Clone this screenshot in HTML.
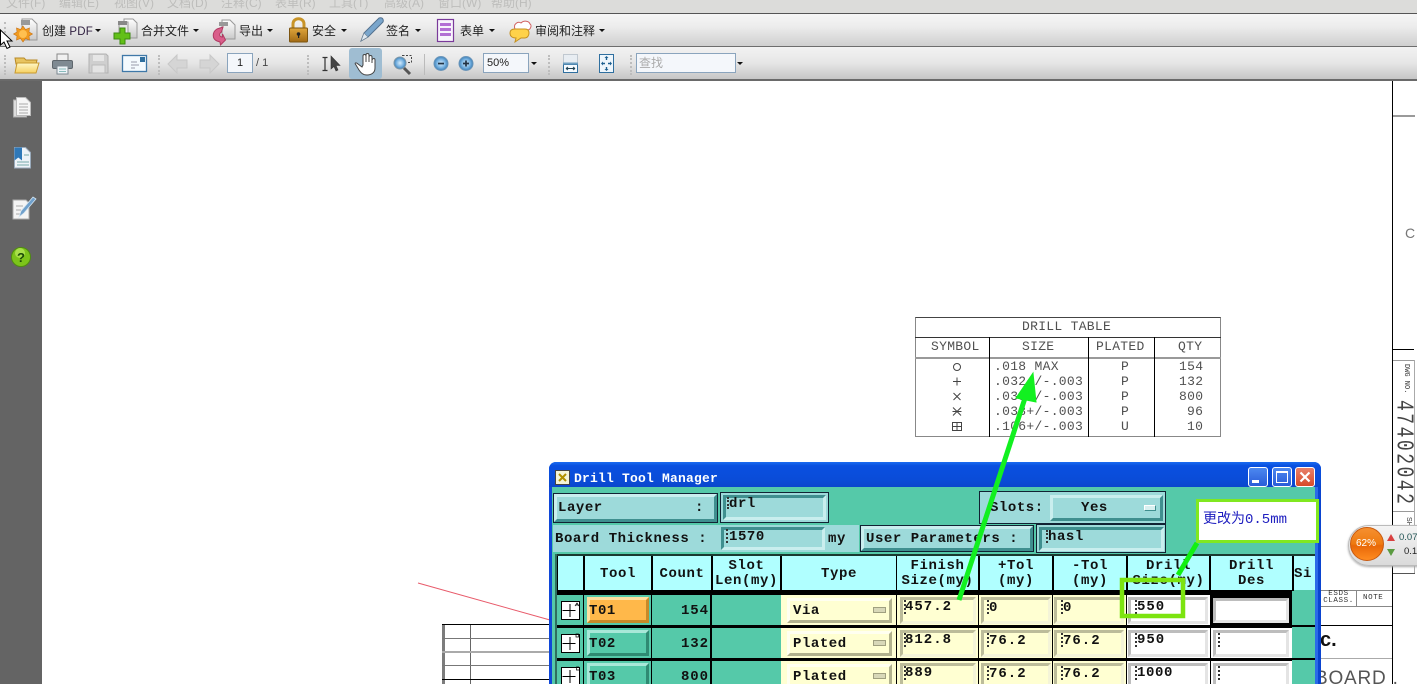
<!DOCTYPE html>
<html><head><meta charset="utf-8"><title>Drill Tool Manager</title>
<style>
html,body{margin:0;padding:0;width:1417px;height:684px;overflow:hidden;background:#fff}
#p{position:relative;width:1417px;height:684px;overflow:hidden;background:#fff;font-family:"Liberation Sans","Noto Sans CJK SC",sans-serif}
#p div{position:absolute;box-sizing:border-box}
.t{white-space:pre;line-height:1}
.m{font-size:12px;color:#bdbdbb;top:-3px}
.tb{font-size:12px;color:#222;top:25px}
.c{width:0;height:0;border-left:3px solid transparent;border-right:3px solid transparent;border-top:3px solid #111}
.in{background:#f4f7fb;border:1px solid #8aa4bd;height:20px;top:53px}
.grip{width:2px;border-left:2px dotted #bdbdbd}
.d{font-family:"Liberation Mono","DejaVu Sans Mono",monospace;font-weight:bold;font-size:14px;letter-spacing:.55px;color:#111;white-space:pre;line-height:1}
.b{background:#9ddada;border:3px solid;border-color:#c9eeee #3f8f8f #3f8f8f #c9eeee;outline:1px solid #123}
.f{background:#9ddada;border:3px solid;border-color:#3f8f8f #c9eeee #c9eeee #3f8f8f}
.h{background:#b0ffff;top:556px;height:34px;text-align:center;font-family:"Liberation Mono",monospace;font-weight:bold;font-size:14px;line-height:15px;letter-spacing:.6px;color:#111;white-space:pre;padding-top:3px}
.tc{background:#55c9a9}
.y{background:#ffffd2}
.w{background:#fff}
.ty{background:#ffffd2;border:3px solid;border-color:#fffff0 #b2b28e #b2b28e #fffff0}
.fy{background:#ffffd2;border:3px solid;border-color:#bcbc9a #f4f4d8 #f4f4d8 #bcbc9a}
.fw{background:#fff;border:3px solid;border-color:#bdbdbd #e4e4e4 #e4e4e4 #bdbdbd}
.bt{background:#55c9a9;border:3px solid;border-color:#a8e8d8 #2f8a72 #2f8a72 #a8e8d8}
.cur{width:1px;border-left:2px dotted #333}
.g{font-family:"Liberation Mono",monospace;font-size:13px;letter-spacing:.3px;color:#505050;white-space:pre;line-height:1}
.ln{background:#000}
.gr{background:#9a9a9a}
</style></head><body><div id="p">

<!-- menu bar -->
<div style="left:0;top:0;width:1417px;height:13px;background:#dcdcda"></div>
<div class="t m" style="left:6px">文件(F)</div><div class="t m" style="left:59px">编辑(E)</div><div class="t m" style="left:114px">视图(V)</div><div class="t m" style="left:167px">文档(D)</div><div class="t m" style="left:221px">注释(C)</div><div class="t m" style="left:275px">表单(R)</div><div class="t m" style="left:329px">工具(T)</div><div class="t m" style="left:384px">高级(A)</div><div class="t m" style="left:438px">窗口(W)</div><div class="t m" style="left:491px">帮助(H)</div>

<!-- toolbars -->
<div style="left:0;top:13px;width:1417px;height:34px;background:linear-gradient(#f6f6f6,#ececec 40%,#cfcfcf);border-top:1px solid #555;border-bottom:1px solid #6d6d6d"></div>
<div style="left:0;top:47px;width:1417px;height:34px;background:linear-gradient(#f2f2f2,#e6e6e6 50%,#c6c6c6);border-bottom:2px solid #6a6a6a"></div>

<div class="grip" style="left:4px;top:22px;height:19px"></div>
<div class="grip" style="left:4px;top:55px;height:20px"></div>
<div class="grip" style="left:158px;top:55px;height:20px"></div>
<div class="grip" style="left:307px;top:55px;height:20px"></div>
<div class="grip" style="left:548px;top:55px;height:20px"></div>
<div class="grip" style="left:630px;top:55px;height:20px"></div>
<div style="left:424px;top:54px;width:1px;height:21px;background:#bbb"></div>

<div class="t tb" style="left:42px">创建 <span style="color:#302040;font-size:11.500px;letter-spacing:.2px">PDF</span></div><div class="c" style="left:95px;top:29px"></div>
<div class="t tb" style="left:141px">合并文件</div><div class="c" style="left:193px;top:29px"></div>
<div class="t tb" style="left:239px">导出</div><div class="c" style="left:267px;top:29px"></div>
<div class="t tb" style="left:312px">安全</div><div class="c" style="left:341px;top:29px"></div>
<div class="t tb" style="left:386px">签名</div><div class="c" style="left:415px;top:29px"></div>
<div class="t tb" style="left:460px">表单</div><div class="c" style="left:489px;top:29px"></div>
<div class="t tb" style="left:535px">审阅和注释</div><div class="c" style="left:599px;top:29px"></div>

<div class="in" style="left:227px;width:26px"></div>
<div class="t" style="left:237px;top:58px;font-size:11px;color:#222">1</div>
<div class="t" style="left:256px;top:58px;font-size:11px;color:#444">/ 1</div>
<div class="in" style="left:483px;width:46px"></div>
<div class="t" style="left:487px;top:58px;font-size:11px;color:#222">50%</div><div class="c" style="left:531px;top:62px"></div>
<div class="in" style="left:636px;width:100px"></div>
<div class="t" style="left:639px;top:57px;font-size:12px;color:#aaa">查找</div><div class="c" style="left:737px;top:62px"></div>
<div style="left:349px;top:48px;width:33px;height:31px;background:#9fbdd2;border-radius:3px"></div>

<svg style="position:absolute;left:0;top:0" width="760" height="82" viewBox="0 0 760 82">
<defs>
<linearGradient id="doc" x1="0" y1="0" x2="0" y2="1"><stop offset="0" stop-color="#fff"/><stop offset="1" stop-color="#c9c9c9"/></linearGradient>
<linearGradient id="fold" x1="0" y1="0" x2="0" y2="1"><stop offset="0" stop-color="#fff8c8"/><stop offset="1" stop-color="#f6d060"/></linearGradient>
<linearGradient id="lock" x1="0" y1="0" x2="0" y2="1"><stop offset="0" stop-color="#e0a63c"/><stop offset="1" stop-color="#a26a14"/></linearGradient>
<radialGradient id="blu"><stop offset="0" stop-color="#d6ecfb"/><stop offset=".6" stop-color="#7ab4e2"/><stop offset="1" stop-color="#3c80b8"/></radialGradient>
</defs>
<!-- create pdf -->
<path d="M22 19h10l5 5v16H22z" fill="url(#doc)" stroke="#999"/><rect x="21" y="20" width="9" height="5" fill="#999"/>
<path d="M23 26l2.500 3.500 4-1.500-.5 4 3.500 2-3.500 2 .5 4-4-1.500L23 42l-2.500-3.500-4 1.500.5-4-3.500-2 3.500-2-.5-4 4 1.500z" fill="#f09a20" stroke="#c87010" stroke-width=".6"/><circle cx="23" cy="34" r="4" fill="#ffc050"/>
<!-- merge -->
<path d="M124 19h9l4 4v15h-13z" fill="url(#doc)" stroke="#999"/><path d="M119 22h9v16h-9z" fill="#e8e8e8" stroke="#999"/><rect x="118" y="21" width="9" height="4" fill="#888"/>
<path d="M120 28h5v5h5v6h-5v5h-5v-5h-6v-6h6z" fill="#62c018" stroke="#3c8a10"/>
<!-- export -->
<path d="M222 20h8l5 5v14h-13z" fill="url(#doc)" stroke="#999"/><rect x="219" y="22" width="9" height="4" fill="#999"/>
<path d="M223 27l-6 2c-5 3-5 10 0 12l3 1 .5 3 5-5-3-6v3c-3 0-4-3-1-5z" fill="#d95e8a" stroke="#b03a62"/>
<!-- lock -->
<path d="M293 29v-5c0-7 11-7 11 0v5" fill="none" stroke="#c89428" stroke-width="3"/><rect x="289.500" y="28" width="18" height="14" rx="1" fill="url(#lock)" stroke="#7c5410"/><circle cx="298.500" cy="34" r="1.800" fill="#222"/><rect x="298" y="34" width="1.200" height="4" fill="#222"/>
<!-- pen -->
<path d="M361 41l3-8 15-15c3-1 5 1 4 4l-15 15z" fill="#7aa6cc" stroke="#53718f"/><path d="M361 41l3-8 4 4z" fill="#dfe8f0" stroke="#6a7f90" stroke-width=".6"/>
<!-- form -->
<rect x="437.500" y="19.500" width="16" height="22" fill="#f8f4fc" stroke="#7a3a9a" stroke-width="1.200"/><rect x="440" y="23" width="11" height="3" fill="#b36fd4"/><rect x="440" y="28" width="11" height="3" fill="#b36fd4"/><rect x="440" y="33" width="11" height="3" fill="#b36fd4"/>
<!-- comment -->
<path d="M515 29c-2-5 3-8 6-6 3-3 8-2 9 1 2 1 1 6-3 6h-8z" fill="#fff" stroke="#d06060"/>
<path d="M510 33c0-3 2-4 5-4h10c3 0 4 2 4 4 0 3-2 5-4 5h-4l-6 4 1-4c-4 0-6-2-6-5z" fill="#ffd24a" stroke="#c59020"/>
<!-- folder -->
<path d="M15 58h9l2 2h11l-1 4H16z" fill="#e8c460" stroke="#b88a28"/><path d="M15 73l2-10h22l-3 10z" fill="url(#fold)" stroke="#c89a30"/>
<!-- printer -->
<rect x="57" y="54" width="11" height="7" fill="#f0f0f0" stroke="#888"/><rect x="52.500" y="60.500" width="20" height="8" rx="1.500" fill="#7f8a92" stroke="#5e666c"/><rect x="57" y="66" width="11" height="8" fill="#eef3f7" stroke="#7c8890"/><line x1="59" y1="69" x2="66" y2="69" stroke="#8bb"/><line x1="59" y1="71.500" x2="66" y2="71.500" stroke="#8bb"/>
<!-- save -->
<path d="M89 54h17l2 2v17H89z" fill="#cfcfcf" stroke="#b2b2b2"/><rect x="93" y="55" width="11" height="6" fill="#e6e6e6"/><rect x="92" y="65" width="13" height="8" fill="#e4e4e4" stroke="#bbb"/>
<!-- email -->
<rect x="122.500" y="55.500" width="24" height="16" fill="#f4fafe" stroke="#3f78a8" stroke-width="1.300"/><rect x="140" y="57" width="5" height="5" fill="#2f6f9f"/><line x1="131" y1="62" x2="137" y2="62" stroke="#99a"/><line x1="131" y1="65" x2="139" y2="65" stroke="#99a"/><line x1="131" y1="68" x2="135" y2="68" stroke="#99a"/>
<!-- back fwd -->
<path d="M168 64l9-9v5h10v8h-10v5z" fill="#d5d5d5" stroke="#c8c8c8"/>
<path d="M219 64l-9-9v5h-10v8h10v5z" fill="#d5d5d5" stroke="#c8c8c8"/>
<!-- select -->
<path d="M322.500 57.500h5M325 57.500v13M322.500 70.500h5" fill="none" stroke="#333" stroke-width="1.200"/><path d="M331 56v13l3-2.500 2 4.500 2-1-2-4.500h4z" fill="#444" stroke="#333" stroke-width=".6"/>
<!-- hand -->
<path d="M358 64c-2-2-4-1-2 1l3 5c2 3 4 5 8 5s8-2 8-7v-8c0-2-2-2-3 0v3-6c0-2-3-2-3 0v5-7c0-2-3-2-3 0v7-6c0-2-3-2-3 0v9l-1 2z" fill="#fff" stroke="#444" stroke-width="1"/>
<!-- marquee zoom -->
<rect x="402.500" y="55.500" width="9" height="7" fill="none" stroke="#444" stroke-dasharray="2 1.500"/>
<circle cx="400" cy="63" r="6" fill="url(#blu)" stroke="#7f98a8"/><path d="M404 68l6 6" stroke="#555" stroke-width="3"/>
<!-- zoom -/+ -->
<circle cx="441" cy="63.500" r="7" fill="url(#blu)" stroke="#6a94b8"/><rect x="438" y="62.700" width="6" height="1.700" fill="#234"/>
<circle cx="466" cy="63.500" r="7" fill="url(#blu)" stroke="#6a94b8"/><path d="M463 63.500h6M466 60.500v6" stroke="#234" stroke-width="1.700"/>
<!-- fit width / page -->
<rect x="563.500" y="54.500" width="14" height="9" fill="#e8edf2" stroke="#c0c8d0"/><rect x="563.500" y="64.500" width="14" height="8" fill="#f6fbff" stroke="#2f6f9f"/><rect x="563" y="62.500" width="15" height="2" fill="#6f9fc0"/><path d="M566 68.500h9M566 68.500l2-1.500M566 68.500l2 1.500M575 68.500l-2-1.500M575 68.500l-2 1.500" stroke="#245" fill="none"/>
<rect x="599.500" y="54.500" width="14" height="18" fill="#eef6fc" stroke="#2f6f9f"/><path d="M606.500 57v3M606.500 67v3M602 63.500h3M608 63.500h3" stroke="#1d5f8f" stroke-width="1.400"/><path d="M606.500 56l-2 2h4zM606.500 71l-2-2h4zM601 63.500l2-2v4zM612 63.500l-2-2v4z" fill="#1d5f8f"/>
<!-- cursor -->
<path d="M.5 30v15l3.500-3 3 6.500 3-1.500-3-6h5z" fill="#fff" stroke="#000"/>
</svg>

<!-- sidebar -->
<div style="left:0;top:81px;width:42px;height:603px;background:#646464"></div>
<svg style="position:absolute;left:0;top:81px" width="42" height="190" viewBox="0 0 42 190">
<path d="M13.500 19h8v17h13V36H13.500z" fill="#ccc"/><path d="M13.500 19h13v17h-13z" fill="#dcdcdc" stroke="#aaa"/><path d="M16.500 16.500h9l5 5v13h-14z" fill="#f6f6f6" stroke="#bbb"/><path d="M19 23h9M19 26h9M19 29h9M19 32h9" stroke="#aaa"/>
<path d="M14.500 66.500h11l5 5v15.500h-16z" fill="#eef3f8" stroke="#9ab"/><path d="M14.500 66.500h7.500v13l-3.700-3-3.800 3z" fill="#2f78b8"/><path d="M24 74h5M17 81h12M17 84h12" stroke="#7aa"/>
<path d="M13 119h13l3 3v16H13z" fill="#f4f4f4" stroke="#aaa"/><path d="M16 125h7M16 129h5M16 133h4" stroke="#aaa"/>
<path d="M19 136l2-6 12-14 3 2-12 14z" fill="#6fa0cc" stroke="#d8e6f0" stroke-width=".8"/>
<circle cx="21" cy="176" r="9.500" fill="#7cc41a" stroke="#4f8c10"/><circle cx="20" cy="172" r="5" fill="#a8e04a"/>
<text x="21" y="181" font-family="Liberation Sans" font-weight="bold" font-size="13" text-anchor="middle" fill="#1c4a08">?</text>
</svg>

<!-- right side drawing -->
<div class="ln" style="left:1392px;top:81px;width:1px;height:603px"></div>
<div class="gr" style="left:1393px;top:115px;width:22px;height:2px"></div>
<div class="t" style="left:1405px;top:226px;font-size:14px;color:#777">C</div>
<div class="ln" style="left:1393px;top:349px;width:21px;height:1px"></div>
<div class="gr" style="left:1393px;top:360px;width:21px;height:1px"></div>
<div style="left:1414px;top:360px;width:1px;height:213px;background:#aaa"></div>
<div class="t" style="left:1396px;top:378px;transform-origin:0 0;transform:rotate(90deg) translate(-14px,-13px);font-size:7px;color:#333;font-family:'Liberation Mono',monospace">DWG NO.</div>
<div class="t" style="left:1415px;top:400px;transform-origin:0 0;transform:rotate(90deg) scaleY(1.350);font-size:18px;letter-spacing:2.500px;color:#444;font-family:'Liberation Mono',monospace;font-weight:normal">47402042</div>
<div class="gr" style="left:1393px;top:511px;width:21px;height:1px"></div>
<div class="t" style="left:1412px;top:517px;transform-origin:0 0;transform:rotate(90deg);font-size:7px;color:#333">SH</div>
<div style="left:1393px;top:573px;width:22px;height:1px;background:#555"></div>

<div style="left:1321px;top:590px;width:71px;height:1px;background:#888"></div>
<div style="left:1321px;top:606px;width:71px;height:1px;background:#888"></div>
<div style="left:1356px;top:590px;width:1px;height:17px;background:#888"></div>
<div class="t" style="left:1321px;top:591px;width:35px;text-align:center;font:7.500px/7px 'Liberation Mono',monospace;letter-spacing:.6px;color:#333">ESDS<br>CLASS.</div>
<div class="t" style="left:1363px;top:594px;font:7.500px 'Liberation Mono',monospace;letter-spacing:.6px;color:#333">NOTE</div>
<div class="ln" style="left:1321px;top:625px;width:71px;height:1px"></div>
<div style="left:1321px;top:658px;width:71px;height:1px;background:#aaa"></div>
<div class="t" style="left:1320px;top:630px;font-size:20px;font-weight:bold;color:#111">c.</div>
<div class="t" style="left:1315px;top:668px;font:19px 'Liberation Sans',sans-serif;letter-spacing:.8px;color:#555">BOARD .</div>

<!-- widget -->
<div style="left:1348px;top:525px;width:90px;height:41px;border-radius:21px;background:linear-gradient(#f4f4f4,#dadada);border:1px solid #bbb;box-shadow:0 1px 2px #aaa"></div>
<div style="left:1350px;top:527px;width:34px;height:34px;border-radius:50%;background:linear-gradient(#f59030,#ee7a10 50%,#e86808 55%,#ff8c20);border:1px solid #c85a10"></div>
<div class="t" style="left:1356px;top:539px;font-size:10px;color:#fff">62%</div>
<div style="left:1387px;top:534px;width:0;height:0;border-left:4px solid transparent;border-right:4px solid transparent;border-bottom:7px solid #d84040"></div>
<div style="left:1387px;top:549px;width:0;height:0;border-left:4px solid transparent;border-right:4px solid transparent;border-top:7px solid #5a9a40"></div>
<div class="t" style="left:1399px;top:533px;font-size:9.500px;color:#255">0.07</div>
<div class="t" style="left:1404px;top:547px;font-size:9.500px;color:#222">0.1</div>

<!-- lower left table -->
<div style="left:442px;top:624px;width:3px;height:60px;background:#7c7c7c"></div>
<div style="left:470px;top:624px;width:1px;height:60px;background:#666"></div>
<div class="ln" style="left:442px;top:624px;width:108px;height:1px"></div>
<div style="left:442px;top:638px;width:108px;height:1px;background:#777"></div>
<div style="left:442px;top:651px;width:108px;height:2px;background:#aaa"></div>
<div style="left:442px;top:665px;width:108px;height:1px;background:#777"></div>
<div class="ln" style="left:442px;top:679px;width:108px;height:1px"></div>

<!-- drill table -->
<div style="left:915px;top:317px;width:306px;height:120px;border:1px solid #444;border-bottom-color:#888;border-left-color:#888;border-right-color:#888"></div>
<div style="left:915px;top:337px;width:306px;height:1px;background:#333"></div>
<div style="left:915px;top:357px;width:306px;height:2px;background:#999"></div>
<div class="ln" style="left:989px;top:337px;width:1px;height:100px"></div>
<div class="ln" style="left:1088px;top:337px;width:1px;height:100px"></div>
<div class="ln" style="left:1154px;top:337px;width:1px;height:100px"></div>
<div class="g" style="left:1022px;top:320px">DRILL TABLE</div>
<div class="g" style="left:931px;top:340px">SYMBOL</div><div class="g" style="left:1022px;top:340px">SIZE</div><div class="g" style="left:1096px;top:340px">PLATED</div><div class="g" style="left:1178px;top:340px">QTY</div>
<div class="g" style="left:994px;top:360px">.018 MAX</div><div class="g" style="left:994px;top:375px">.032+/-.003</div><div class="g" style="left:994px;top:390px">.038+/-.003</div><div class="g" style="left:994px;top:405px">.038+/-.003</div><div class="g" style="left:994px;top:420px">.106+/-.003</div>
<div class="g" style="left:1121px;top:360px">P</div><div class="g" style="left:1121px;top:375px">P</div><div class="g" style="left:1121px;top:390px">P</div><div class="g" style="left:1121px;top:405px">P</div><div class="g" style="left:1121px;top:420px">U</div>
<div class="g" style="left:1179px;top:360px">154</div><div class="g" style="left:1179px;top:375px">132</div><div class="g" style="left:1179px;top:390px">800</div><div class="g" style="left:1187px;top:405px">96</div><div class="g" style="left:1187px;top:420px">10</div>
<svg style="position:absolute;left:945px;top:360px" width="24" height="72" viewBox="0 0 24 72" fill="none" stroke="#444">
<circle cx="12" cy="7" r="3.500"/><path d="M8 21.500h8M12 17.500v8"/><path d="M8.500 33l7 7M15.500 33l-7 7"/><path d="M8 47.500l8 8M16 47.500l-8 8M7.500 51.500h9"/><rect x="7.500" y="62.500" width="9" height="8"/><path d="M12 62.500v8M7.500 66.500h9"/>
</svg>

<!-- red line -->
<svg style="position:absolute;left:410px;top:575px" width="145" height="50"><line x1="8" y1="8" x2="140" y2="45" stroke="#e85a6a" stroke-width="1"/></svg>

<!-- dialog -->
<div style="left:549px;top:462px;width:772px;height:222px;background:#0a44d0;border-radius:7px 7px 0 0"></div>
<div style="left:549px;top:462px;width:772px;height:25px;border-radius:7px 7px 0 0;background:linear-gradient(#1a6cf0,#0a50e0 15%,#0a4cd8 70%,#0a46cc)"></div>
<div style="left:552px;top:487px;width:763px;height:197px;background:#55c9a9"></div>
<div style="left:1315px;top:487px;width:3px;height:197px;background:#2a6ae8"></div>
<div style="left:549px;top:487px;width:3px;height:197px;background:#1048d8"></div>
<div style="left:555px;top:470px;width:15px;height:15px;background:#f4f4d8;border:1px solid #444"></div>
<svg style="position:absolute;left:555px;top:470px" width="15" height="15"><path d="M4 4l7 7M11 4l-7 7" stroke="#b09000" stroke-width="2"/></svg>
<div class="t" style="left:574px;top:471px;font:bold 13px 'Liberation Mono',monospace;color:#fff;letter-spacing:.2px">Drill Tool Manager</div>
<div style="left:1248px;top:467px;width:20px;height:20px;border:1px solid #fff;border-radius:3px;background:linear-gradient(#4c88f0,#2a5cd8)"></div><div style="left:1252px;top:480px;width:7px;height:3px;background:#fff"></div>
<div style="left:1272px;top:467px;width:20px;height:20px;border:1px solid #fff;border-radius:3px;background:linear-gradient(#4c88f0,#2a5cd8)"></div><div style="left:1276px;top:471px;width:12px;height:12px;border:1px solid #fff;border-top-width:2px"></div>
<div style="left:1295px;top:467px;width:20px;height:20px;border:1px solid #fff;border-radius:3px;background:linear-gradient(#e8806a,#d84a28)"></div>
<svg style="position:absolute;left:1295px;top:467px" width="20" height="20"><path d="M5.500 5.500l9 9M14.500 5.500l-9 9" stroke="#fff" stroke-width="2.200"/></svg>

<!-- top controls -->
<div class="b" style="left:554px;top:494px;width:163px;height:28px"></div>
<div class="d" style="left:558px;top:501px">Layer</div><div class="d" style="left:695px;top:501px">:</div>
<div style="left:720px;top:492px;width:109px;height:31px;background:#9ddada;border:1px solid #123"></div>
<div class="f" style="left:723px;top:495px;width:103px;height:25px"></div>
<div class="cur" style="left:727px;top:497px;height:12px"></div><div class="d" style="left:729px;top:497px">drl</div>
<div style="left:979px;top:491px;width:187px;height:33px;background:#9ddada;border:1px solid #123"></div>
<div class="b" style="left:1050px;top:495px;width:113px;height:26px;outline:none"></div>
<div class="d" style="left:990px;top:501px">Slots:</div><div class="d" style="left:1081px;top:501px">Yes</div>
<div style="left:1144px;top:505px;width:12px;height:6px;background:#d8f0f0;border:1px solid #3f8f8f;border-top-color:#fff;border-left-color:#fff"></div>

<div style="left:553px;top:525px;width:306px;height:27px;background:#9ddada"></div>
<div class="d" style="left:555px;top:532px">Board Thickness :</div>
<div class="f" style="left:721px;top:527px;width:104px;height:23px"></div>
<div class="cur" style="left:726px;top:529px;height:14px"></div><div class="d" style="left:729px;top:530px">1570</div>
<div class="d" style="left:828px;top:532px">my</div>
<div style="left:859px;top:524px;width:306px;height:28px;background:#55c9a9"></div>
<div class="b" style="left:861px;top:526px;width:172px;height:25px"></div>
<div class="d" style="left:866px;top:532px">User Parameters :</div>
<div style="left:1036px;top:524px;width:130px;height:29px;background:#9ddada;border:1px solid #123"></div>
<div class="f" style="left:1039px;top:527px;width:125px;height:24px"></div>
<div class="cur" style="left:1046px;top:530px;height:13px"></div><div class="d" style="left:1048px;top:530px">hasl</div>

<!-- table frame -->
<div style="left:555px;top:554px;width:2px;height:130px;background:#2f6f5f"></div>
<div style="left:557px;top:554px;width:737px;height:130px;background:#000"></div>
<div class="tc" style="left:1292px;top:554px;width:23px;height:130px"></div>
<div style="left:1292px;top:554px;width:2px;height:37px;background:#000"></div>
<div style="left:557px;top:554px;width:758px;height:2px;background:#1a3a30"></div>

<!-- headers -->
<div class="h" style="left:558px;width:25px"></div>
<div class="h" style="left:585px;width:66px;line-height:30px;padding:3px 0 0">Tool</div>
<div class="h" style="left:653px;width:58px;line-height:30px;padding:3px 0 0">Count</div>
<div class="h" style="left:713px;width:67px">Slot
Len(my)</div>
<div class="h" style="left:782px;width:114px;line-height:30px;padding:3px 0 0">Type</div>
<div class="h" style="left:897px;width:81px">Finish
Size(my)</div>
<div class="h" style="left:980px;width:72px">+Tol
(my)</div>
<div class="h" style="left:1054px;width:72px">-Tol
(my)</div>
<div class="h" style="left:1128px;width:81px">Drill
Size(my)</div>
<div class="h" style="left:1211px;width:81px">Drill
Des</div>
<div class="h" style="left:1294px;width:21px;text-align:left;line-height:30px;padding:3px 0 0;overflow:hidden">Si</div>

<!-- row 1 -->
<div class="tc" style="left:557px;top:595px;width:26px;height:30px"></div>
<div class="tc" style="left:584px;top:595px;width:67px;height:30px"></div>
<div class="tc" style="left:652px;top:595px;width:58px;height:30px"></div>
<div class="tc" style="left:712px;top:595px;width:69px;height:30px"></div>
<div class="y" style="left:781px;top:595px;width:115px;height:30px"></div>
<div class="y" style="left:897px;top:595px;width:81px;height:30px"></div>
<div class="y" style="left:979px;top:595px;width:73px;height:30px"></div>
<div class="y" style="left:1053px;top:595px;width:73px;height:30px"></div>
<div class="w" style="left:1127px;top:595px;width:83px;height:30px"></div>
<div class="w" style="left:1211px;top:595px;width:81px;height:30px"></div>
<div class="tc" style="left:1292px;top:595px;width:23px;height:89px"></div>
<div style="left:1292px;top:625px;width:23px;height:2px;background:#000"></div>
<div style="left:1292px;top:658px;width:23px;height:2px;background:#000"></div>

<div style="left:561px;top:601px;width:19px;height:19px;background:#fff;border:1px solid #000"></div>
<div class="bt" style="left:587px;top:597px;width:62px;height:26px;background:#ffb84a;border-color:#ffe0a0 #c88a28 #c88a28 #ffe0a0"></div>
<div class="d" style="left:589px;top:604px">T01</div><div class="d" style="left:681px;top:604px;letter-spacing:.9px">154</div>
<div class="ty" style="left:787px;top:598px;width:105px;height:25px"></div>
<div class="d" style="left:793px;top:604px">Via</div>
<div style="left:873px;top:607px;width:13px;height:6px;background:#d8d8b8;border:1px solid #a0a080"></div>
<div class="fy" style="left:900px;top:597px;width:76px;height:27px"></div><div class="cur" style="left:904px;top:600px;height:14px"></div><div class="d" style="left:905px;top:600px;letter-spacing:1px">457.2</div>
<div class="fy" style="left:981px;top:597px;width:70px;height:27px"></div><div class="cur" style="left:987px;top:600px;height:14px"></div><div class="d" style="left:989px;top:601px">0</div>
<div class="fy" style="left:1054px;top:597px;width:70px;height:27px"></div><div class="cur" style="left:1061px;top:600px;height:14px"></div><div class="d" style="left:1063px;top:601px">0</div>
<div class="fw" style="left:1128px;top:597px;width:80px;height:27px"></div><div class="cur" style="left:1135px;top:600px;height:14px"></div><div class="d" style="left:1137px;top:600px;letter-spacing:1px">550</div>
<div style="left:1210px;top:595px;width:82px;height:31px;border:3px solid #000;background:#fff"></div>
<div class="fw" style="left:1213px;top:598px;width:76px;height:25px"></div>

<!-- row 2 -->
<div class="tc" style="left:557px;top:628px;width:26px;height:30px"></div>
<div class="tc" style="left:584px;top:628px;width:67px;height:30px"></div>
<div class="tc" style="left:652px;top:628px;width:58px;height:30px"></div>
<div class="tc" style="left:712px;top:628px;width:69px;height:30px"></div>
<div class="y" style="left:781px;top:628px;width:115px;height:30px"></div>
<div class="y" style="left:897px;top:628px;width:81px;height:30px"></div>
<div class="y" style="left:979px;top:628px;width:73px;height:30px"></div>
<div class="y" style="left:1053px;top:628px;width:73px;height:30px"></div>
<div class="w" style="left:1127px;top:628px;width:83px;height:30px"></div>
<div class="w" style="left:1211px;top:628px;width:81px;height:30px"></div>
<div style="left:561px;top:634px;width:19px;height:19px;background:#fff;border:1px solid #000"></div>
<div class="bt" style="left:587px;top:630px;width:62px;height:26px"></div>
<div class="d" style="left:589px;top:637px">T02</div><div class="d" style="left:681px;top:637px;letter-spacing:.9px">132</div>
<div class="ty" style="left:787px;top:631px;width:105px;height:25px"></div>
<div class="d" style="left:793px;top:637px">Plated</div>
<div style="left:873px;top:640px;width:13px;height:6px;background:#d8d8b8;border:1px solid #a0a080"></div>
<div class="fy" style="left:900px;top:630px;width:76px;height:27px"></div><div class="cur" style="left:904px;top:633px;height:14px"></div><div class="d" style="left:905px;top:633px;letter-spacing:1px">812.8</div>
<div class="fy" style="left:981px;top:630px;width:70px;height:27px"></div><div class="cur" style="left:987px;top:633px;height:14px"></div><div class="d" style="left:989px;top:634px;letter-spacing:1px">76.2</div>
<div class="fy" style="left:1054px;top:630px;width:70px;height:27px"></div><div class="cur" style="left:1061px;top:633px;height:14px"></div><div class="d" style="left:1063px;top:634px;letter-spacing:1px">76.2</div>
<div class="fw" style="left:1128px;top:630px;width:80px;height:27px"></div><div class="cur" style="left:1135px;top:633px;height:14px"></div><div class="d" style="left:1137px;top:633px;letter-spacing:1px">950</div>
<div class="fw" style="left:1213px;top:630px;width:76px;height:27px"></div><div class="cur" style="left:1218px;top:633px;height:14px"></div>

<!-- row 3 -->
<div class="tc" style="left:557px;top:661px;width:26px;height:23px"></div>
<div class="tc" style="left:584px;top:661px;width:67px;height:23px"></div>
<div class="tc" style="left:652px;top:661px;width:58px;height:23px"></div>
<div class="tc" style="left:712px;top:661px;width:69px;height:23px"></div>
<div class="y" style="left:781px;top:661px;width:115px;height:23px"></div>
<div class="y" style="left:897px;top:661px;width:81px;height:23px"></div>
<div class="y" style="left:979px;top:661px;width:73px;height:23px"></div>
<div class="y" style="left:1053px;top:661px;width:73px;height:23px"></div>
<div class="w" style="left:1127px;top:661px;width:83px;height:23px"></div>
<div class="w" style="left:1211px;top:661px;width:81px;height:23px"></div>
<div style="left:561px;top:667px;width:19px;height:19px;background:#fff;border:1px solid #000"></div>
<div class="bt" style="left:587px;top:663px;width:62px;height:26px"></div>
<div class="d" style="left:589px;top:670px">T03</div><div class="d" style="left:681px;top:670px;letter-spacing:.9px">800</div>
<div class="ty" style="left:787px;top:664px;width:105px;height:25px"></div>
<div class="d" style="left:793px;top:670px">Plated</div>
<div style="left:873px;top:673px;width:13px;height:6px;background:#d8d8b8;border:1px solid #a0a080"></div>
<div class="fy" style="left:900px;top:663px;width:76px;height:27px"></div><div class="cur" style="left:904px;top:666px;height:14px"></div><div class="d" style="left:905px;top:666px;letter-spacing:1px">889</div>
<div class="fy" style="left:981px;top:663px;width:70px;height:27px"></div><div class="cur" style="left:987px;top:666px;height:14px"></div><div class="d" style="left:989px;top:667px;letter-spacing:1px">76.2</div>
<div class="fy" style="left:1054px;top:663px;width:70px;height:27px"></div><div class="cur" style="left:1061px;top:666px;height:14px"></div><div class="d" style="left:1063px;top:667px;letter-spacing:1px">76.2</div>
<div class="fw" style="left:1128px;top:663px;width:80px;height:27px"></div><div class="cur" style="left:1135px;top:666px;height:14px"></div><div class="d" style="left:1137px;top:666px;letter-spacing:.6px">1000</div>
<div class="fw" style="left:1213px;top:663px;width:76px;height:27px"></div><div class="cur" style="left:1218px;top:666px;height:14px"></div>

<!-- row plus icons -->
<svg style="position:absolute;left:561px;top:601px" width="20" height="83" viewBox="0 0 20 83" stroke="#000" fill="none">
<path d="M1.500 9.500h13M9 3v13"/><path d="M1.500 42.500h13M9 36v13"/><path d="M1.500 75.500h13M9 69v13"/>
<path d="M14 5l2-3 2 3M15 4h2" stroke-width=".7"/><path d="M15 36v-3h2.500v3z" stroke-width=".7"/><path d="M18 66h-2.500v3H18" stroke-width=".7"/>
</svg>

<!-- annotation -->
<div style="left:1196px;top:499px;width:123px;height:44px;background:#fff;border:3px solid #80e820"></div>
<div class="t" style="left:1203px;top:508px;font:14px 'Liberation Mono','Noto Sans CJK SC',monospace;color:#2020c0">更改为0.5mm</div>

<svg style="position:absolute;left:0;top:0" width="1417" height="684" viewBox="0 0 1417 684">
<line x1="1197" y1="543" x2="1178" y2="575" stroke="#12f012" stroke-width="5"/>
<rect x="1122" y="580" width="61" height="36" fill="none" stroke="#7ce410" stroke-width="4.500"/>
<line x1="959" y1="600" x2="1026" y2="395" stroke="#12f020" stroke-width="5"/>
<path d="M1033 373L1016 398 1036 402z" fill="#12f020" stroke="#12f020"/>
</svg>
</div></body></html>
